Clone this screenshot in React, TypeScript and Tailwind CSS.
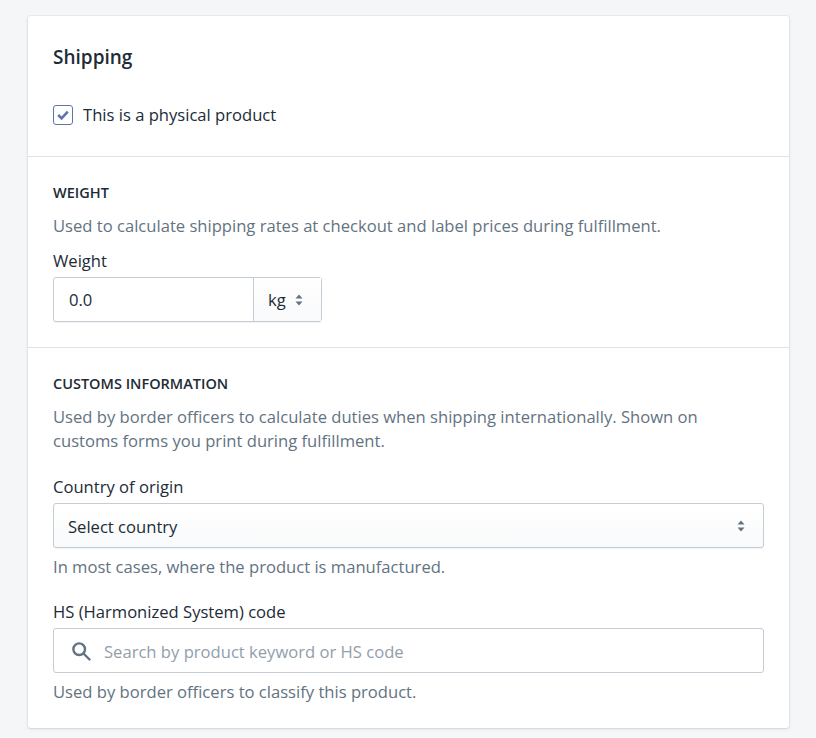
import React from 'react';

function Updown({ className }: { className?: string }) {
  return (
    <svg viewBox="0 0 8 12" className={className} fill="#637381">
      <path d="M4 0.5 L7.5 4.5 L0.5 4.5 Z" />
      <path d="M4 11.5 L7.5 7.5 L0.5 7.5 Z" />
    </svg>
  );
}

export default function App() {
  return (
    <div className="min-h-[738px] bg-[#f4f6f8] pt-4 pl-7 pr-[27px] font-['Open_Sans',sans-serif] text-[16.6px] leading-6 text-[#212b36]">
      <div className="h-[712px] rounded-[3px] bg-white shadow-[0_0_0_1px_rgba(63,63,68,0.05),0_1px_3px_0_rgba(63,63,68,0.15)]">
        {/* Shipping */}
        <div className="h-[141px] border-b border-[#dfe3e8] px-[25px] pt-[27px]">
          <h2 className="text-[19px] leading-7 font-semibold">Shipping</h2>
          <label className="mt-[31px] flex items-center gap-2.5">
            <span className="flex h-5 w-5 items-center justify-center rounded-[3px] border border-[#5f74a8] bg-white">
              <svg viewBox="0 0 16 16" className="h-3.5 w-3.5" fill="none" stroke="#5f74a8" strokeWidth="3">
                <path d="M2.5 8 L6.4 11.8 L13.5 4.2" />
              </svg>
            </span>
            <span className="pt-px">This is a physical product</span>
          </label>
        </div>

        {/* Weight */}
        <div className="h-[191px] border-b border-[#dfe3e8] px-[25px] pt-6">
          <h3 className="pt-px text-[14.5px] leading-[22px] font-semibold uppercase">Weight</h3>
          <p className="mt-[10px] text-[#637381]">Used to calculate shipping rates at checkout and label prices during fulfillment.</p>
          <div className="mt-[11px]">Weight</div>
          <div className="mt-1 flex h-[45px] w-[269px] rounded-[3px] border border-[#c4cdd5] shadow-[0_1px_0_0_rgba(22,29,37,0.05)]">
            <div className="flex w-[200px] items-center border-r border-[#c4cdd5] pl-[15px]">0.0</div>
            <div className="flex flex-1 items-center gap-[9px] bg-gradient-to-b from-white to-[#f9fafb] pl-3.5">
              <span>kg</span>
              <Updown className="h-3 w-2" />
            </div>
          </div>
        </div>

        {/* Customs */}
        <div className="px-[25px] pt-6">
          <h3 className="pt-px text-[14.5px] leading-[22px] font-semibold uppercase">Customs information</h3>
          <p className="mt-[10px] w-[680px] text-[#637381]">
            Used by border officers to calculate duties when shipping internationally. Shown on customs forms you print during fulfillment.
          </p>
          <div className="mt-[22px]">Country of origin</div>
          <div className="mt-1 flex h-[45px] items-center justify-between rounded-[3px] border border-[#c4cdd5] bg-gradient-to-b from-white to-[#f9fafb] pr-[18px] pl-3.5 shadow-[0_1px_0_0_rgba(22,29,37,0.05)]">
            <span className="pt-0.5">Select country</span>
            <Updown className="h-3 w-2" />
          </div>
          <p className="mt-[7px] text-[#637381]">In most cases, where the product is manufactured.</p>
          <div className="mt-[21px]">HS (Harmonized System) code</div>
          <div className="mt-1 flex h-[45px] items-center gap-[13px] rounded-[3px] border border-[#c4cdd5] pl-[17px]">
            <svg viewBox="0 0 20 20" className="h-5 w-5" fill="none" stroke="#637381" strokeWidth="2.4">
              <circle cx="8.2" cy="8.2" r="5.8" />
              <path d="M12.5 12.5 L18.5 18.5" strokeLinecap="round" />
            </svg>
            <span className="pt-0.5 text-[#919eab]">Search by product keyword or HS code</span>
          </div>
          <p className="mt-[7px] text-[#637381]">Used by border officers to classify this product.</p>
        </div>
      </div>
    </div>
  );
}
